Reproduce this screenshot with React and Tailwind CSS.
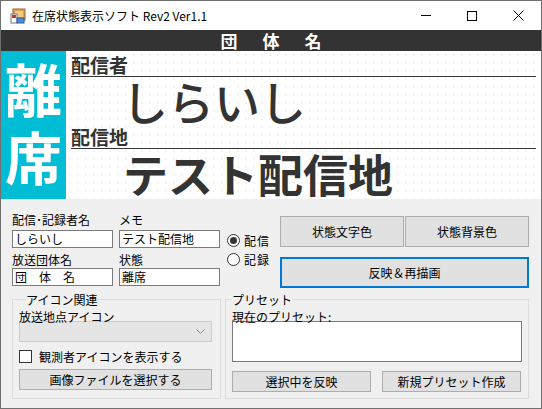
import React from "react";

const F = { fontFamily: '"Noto Sans CJK JP", "Noto Sans", sans-serif' };

function Btn({ children, className = "", primary = false }) {
  return (
    <div
      className={
        "flex items-center justify-center bg-[#e1e1e1] text-[12px] leading-[15px] text-black " +
        (primary ? "border-2 border-[#0078d7] " : "border border-[#adadad] ") +
        className
      }
    >
      {children}
    </div>
  );
}

function Input({ children, className = "" }) {
  return (
    <div className={"bg-white border border-[#7a7a7a] text-[12px] leading-[16px] pl-[2px] text-black whitespace-pre " + className}>
      {children}
    </div>
  );
}

function Radio({ checked, label }) {
  return (
    <div className="flex items-center h-[19px]">
      <div className="w-[13px] h-[13px] rounded-full border border-[#333] bg-white flex items-center justify-center shrink-0">
        {checked && <div className="w-[7px] h-[7px] rounded-full bg-[#333]" />}
      </div>
      <span className="ml-[4px] text-[12px] leading-[15px] tracking-[1px] text-black">{label}</span>
    </div>
  );
}

export default function App() {
  return (
    <div style={F} className="w-[542px] h-[409px] border border-[#707070] bg-white flex flex-col overflow-hidden">
      {/* title bar */}
      <div className="h-[29px] flex items-center bg-white shrink-0">
        <svg width="16" height="16" viewBox="0 0 16 16" className="ml-[9px]">
          <rect x="3" y="1" width="12" height="11" fill="#e0a050" stroke="#9a6a30" />
          <rect x="5" y="3" width="8" height="6" fill="#f4c98a" />
          <rect x="1" y="6" width="6" height="9" fill="#ffffff" stroke="#777" />
          <rect x="2" y="7" width="4" height="3" fill="#c0392b" />
          <rect x="7" y="10" width="7" height="5" fill="#4a90d9" stroke="#2a5d99" />
        </svg>
        <span className="ml-[6px] text-[12px] leading-[15px] text-black">在席状態表示ソフト Rev2 Ver1.1</span>
        <div className="ml-auto flex items-center h-full">
          <div className="w-[46px] h-full flex items-center justify-center">
            <div className="w-[10px] h-px bg-black" />
          </div>
          <div className="w-[46px] h-full flex items-center justify-center">
            <div className="w-[10px] h-[10px] border border-black" />
          </div>
          <div className="w-[46px] h-full flex items-center justify-center">
            <svg width="11" height="11" viewBox="0 0 11 11">
              <path d="M0.5 0.5 L10.5 10.5 M10.5 0.5 L0.5 10.5" stroke="#000" strokeWidth="1" />
            </svg>
          </div>
        </div>
      </div>

      {/* dark header */}
      <div className="h-[21px] bg-[#333333] flex items-center justify-center shrink-0">
        <span className="text-white text-[17px] leading-[21px] font-bold tracking-[4px] pl-[4px]">団　体　名</span>
      </div>

      {/* main display */}
      <div className="h-[148px] flex shrink-0">
        <div className="w-[65px] bg-[#00bcd4] flex flex-col items-center pt-[2px]">
          <div className="text-white font-bold text-[57px] leading-[68px] text-center">
            離<br />席
          </div>
        </div>
        <div className="flex-1 pl-[5px] pr-[5px] flex flex-col bg-[radial-gradient(circle,#e4e4e4_0.6px,transparent_0.8px)] bg-[size:8px_8px]">
          <div className="h-[26px] border-b border-[#333] flex items-end">
            <span className="text-[19px] leading-[22px] font-bold text-[#333]">配信者</span>
          </div>
          <div className="h-[46px] pl-[51px] flex items-center">
            <span className="text-[46px] leading-[46px] text-[#333] font-medium">しらいし</span>
          </div>
          <div className="h-[26px] border-b border-[#333] flex items-end">
            <span className="text-[19px] leading-[22px] font-bold text-[#333]">配信地</span>
          </div>
          <div className="h-[50px] pl-[52px] flex items-center">
            <span className="text-[45px] leading-[48px] text-[#333] font-bold">テスト配信地</span>
          </div>
        </div>
      </div>

      {/* control panel */}
      <div className="flex-1 bg-[#f0f0f0] flex flex-col pl-[11px] pt-[11px]">
        <div className="flex h-[80px]">
          <div className="grid grid-cols-[101px_101px] gap-x-[6px] grid-rows-[20px_18px_20px_18px]">
            <div className="text-[12px] leading-[15px] pt-[2px] text-black">配信･記録者名</div>
            <div className="text-[12px] leading-[15px] pt-[2px] text-black">メモ</div>
            <Input>しらいし</Input>
            <Input>テスト配信地</Input>
            <div className="text-[12px] leading-[15px] pt-[4px] text-black">放送団体名</div>
            <div className="text-[12px] leading-[15px] pt-[4px] text-black">状態</div>
            <Input>{"団　体　名"}</Input>
            <Input>離席</Input>
          </div>
          <div className="ml-[7px] w-[53px] shrink-0 pt-[21px] flex flex-col">
            <Radio checked label="配信" />
            <Radio label="記録" />
          </div>
          <div className="pt-[6px] flex flex-col">
            <div className="flex gap-[1px]">
              <Btn className="w-[124px] h-[31px]">状態文字色</Btn>
              <Btn className="w-[124px] h-[31px]">状態背景色</Btn>
            </div>
            <Btn primary className="mt-[10px] w-[249px] h-[31px]">反映＆再描画</Btn>
          </div>
        </div>

        <div className="flex mt-[3px]">
          <fieldset className="w-[209px] h-[106px] border border-[#dcdcdc] pl-[6px]">
            <legend className="ml-[7px] px-0 text-[12px] leading-[13px] text-black">アイコン関連</legend>
            <div className="text-[12px] leading-[13px] text-black mt-[4px]">放送地点アイコン</div>
            <div className="mt-[-2px] w-[193px] h-[21px] bg-[#e5e5e5] border border-[#cccccc] flex items-center justify-end pr-[6px]">
              <svg width="9" height="6" viewBox="0 0 9 6">
                <path d="M0.5 0.5 L4.5 4.5 L8.5 0.5" stroke="#888" fill="none" strokeWidth="1" />
              </svg>
            </div>
            <div className="flex items-center mt-[6px] h-[16px]">
              <div className="w-[13px] h-[13px] bg-white border border-[#333]" />
              <span className="ml-[7px] text-[12px] leading-[15px] text-black">観測者アイコンを表示する</span>
            </div>
            <Btn className="mt-[5px] w-[193px] h-[21px]">画像ファイルを選択する</Btn>
          </fieldset>
          <fieldset className="ml-[4px] w-[304px] h-[106px] border border-[#dcdcdc] pl-[6px]">
            <legend className="ml-[0px] px-0 text-[12px] leading-[13px] text-black">プリセット</legend>
            <div className="text-[12px] leading-[13px] text-black mt-[4px]">現在のプリセット:</div>
            <div className="mt-[-2px] w-[290px] h-[41px] bg-white border border-[#7a7a7a]" />
            <div className="flex mt-[9px]">
              <Btn className="w-[139px] h-[21px]">選択中を反映</Btn>
              <Btn className="ml-[11px] w-[139px] h-[21px]">新規プリセット作成</Btn>
            </div>
          </fieldset>
        </div>
      </div>
    </div>
  );
}
